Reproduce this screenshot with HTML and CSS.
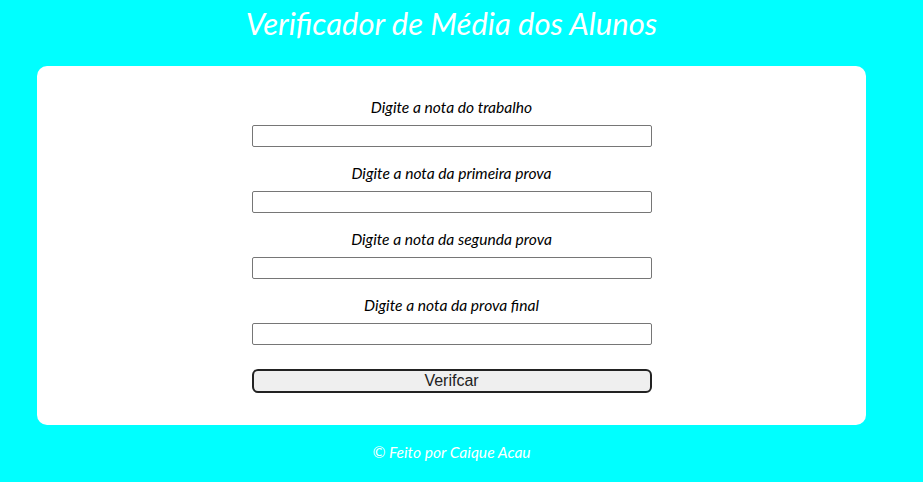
FILE: index.html
```html
<!DOCTYPE html>
<html lang="pt-BR">
<head>
    <meta charset="UTF-8">
    <meta name="viewport" content="width=device-width, initial-scale=1.0">
    <title>Verificador de Média dos Alunos</title>
    <link rel="stylesheet" href="styles.css">
</head>
<body>
    <div class="page">
        <h1>Verificador de Média dos Alunos</h1>
        <main class="card">
            <div class="field">
                <label for="trabalho">Digite a nota do trabalho</label>
                <input type="text" id="trabalho">
            </div>
            <div class="field">
                <label for="prova1">Digite a nota da primeira prova</label>
                <input type="text" id="prova1">
            </div>
            <div class="field">
                <label for="prova2">Digite a nota da segunda prova</label>
                <input type="text" id="prova2">
            </div>
            <div class="field">
                <label for="final">Digite a nota da prova final</label>
                <input type="text" id="final">
            </div>
            <button id="verificar">Verifcar</button>
        </main>
        <footer>© Feito por Caique Acau</footer>
    </div>
</body>
</html>
```

FILE: styles.css
```css
body {
    margin: 0;
    background: #00ffff;
    font-family: Lato, "Open Sans", sans-serif;
}

.page {
    width: 829px;
    margin-left: 37px;
    display: flex;
    flex-direction: column;
    align-items: center;
}

h1 {
    margin: 4px 0 0;
    height: 62px;
    font-size: 31px;
    font-style: italic;
    font-weight: normal;
    color: #fff;
}

.card {
    box-sizing: border-box;
    width: 829px;
    height: 359px;
    background: #fff;
    border-radius: 10px;
    padding: 31px 0 0;
    display: flex;
    flex-direction: column;
    align-items: center;
}

.field {
    display: flex;
    flex-direction: column;
    align-items: center;
    margin-bottom: 16px;
}

label {
    font-size: 15.6px;
    font-style: italic;
    line-height: 20px;
    margin-bottom: 8px;
    color: #000;
}

input {
    box-sizing: border-box;
    width: 400px;
    height: 22px;
    border: 1px solid #767676;
    border-radius: 2px;
    margin: 0;
}

button {
    box-sizing: border-box;
    width: 400px;
    height: 24px;
    margin-top: 8px;
    background: #efefef;
    border: 2px solid #222;
    border-radius: 6px;
    font-family: "Liberation Sans", Arial, sans-serif;
    font-size: 16px;
    color: #222;
    padding: 0;
}

footer {
    margin-top: 18px;
    font-size: 15.6px;
    font-style: italic;
    color: #fff;
}
```
